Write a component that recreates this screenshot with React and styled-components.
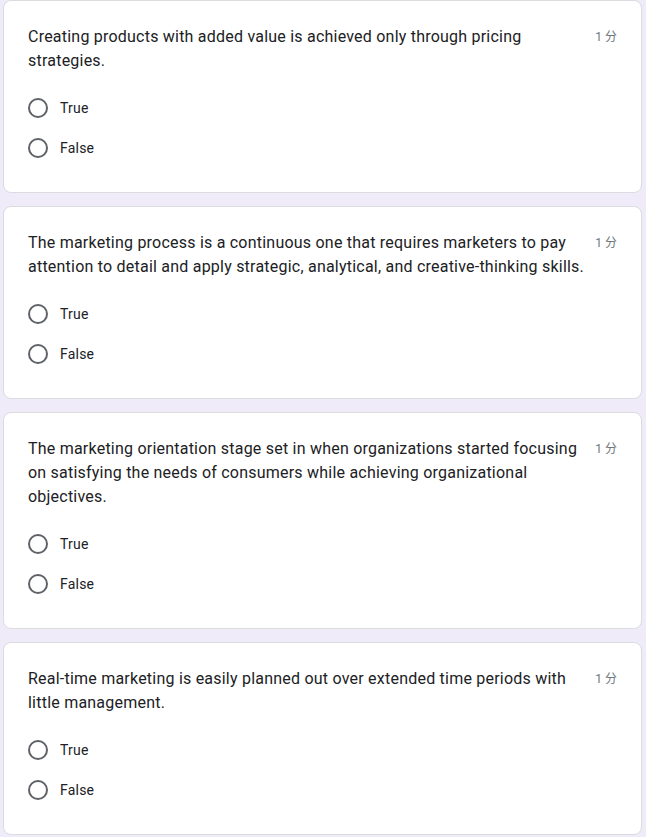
import React from 'react'
import styled, { createGlobalStyle } from 'styled-components'

const GlobalStyle = createGlobalStyle`
  body {
    margin: 0;
    background: #f0ebf8;
    font-family: Roboto, "Noto Sans CJK SC", Arial, sans-serif;
  }
`

const questions = [
  'Creating products with added value is achieved only through pricing strategies.',
  'The marketing process is a continuous one that requires marketers to pay attention to detail and apply strategic, analytical, and creative-thinking skills.',
  'The marketing orientation stage set in when organizations started focusing on satisfying the needs of consumers while achieving organizational objectives.',
  'Real-time marketing is easily planned out over extended time periods with little management.',
]

function App() {
  return (
    <>
      <GlobalStyle />
      <Page>
        {questions.map((q, i) => (
          <Card key={i}>
            <Header>
              <Title>{q}</Title>
              <Points>1 分</Points>
            </Header>
            <Options>
              {['True', 'False'].map((opt) => (
                <Option key={opt}>
                  <Radio />
                  <Label>{opt}</Label>
                </Option>
              ))}
            </Options>
          </Card>
        ))}
      </Page>
    </>
  )
}

export default App

const Page = styled.div`
  display: flex;
  flex-direction: column;
  gap: 13px;
  padding: 0 4px 12px 3px;
`
const Card = styled.div`
  background: #fff;
  border: 1px solid #dadce0;
  border-radius: 8px;
  padding: 24px;
`
const Header = styled.div`
  display: flex;
  justify-content: space-between;
  align-items: flex-start;
`
const Title = styled.div`
  font-size: 16px;
  line-height: 24px;
  letter-spacing: 0.22px;
  color: #202124;
  max-width: 560px;
`
const Points = styled.div`
  font-size: 12px;
  line-height: 24px;
  color: #70757a;
  white-space: nowrap;
  flex-shrink: 0;
`
const Options = styled.div`
  margin-top: 15px;
  display: flex;
  flex-direction: column;
`
const Option = styled.div`
  height: 40px;
  display: flex;
  align-items: center;
  gap: 12px;
`
const Radio = styled.div`
  box-sizing: border-box;
  width: 20px;
  height: 20px;
  border: 2px solid #5f6368;
  border-radius: 50%;
`
const Label = styled.span`
  font-size: 14px;
  color: #202124;
  letter-spacing: 0.2px;
`
